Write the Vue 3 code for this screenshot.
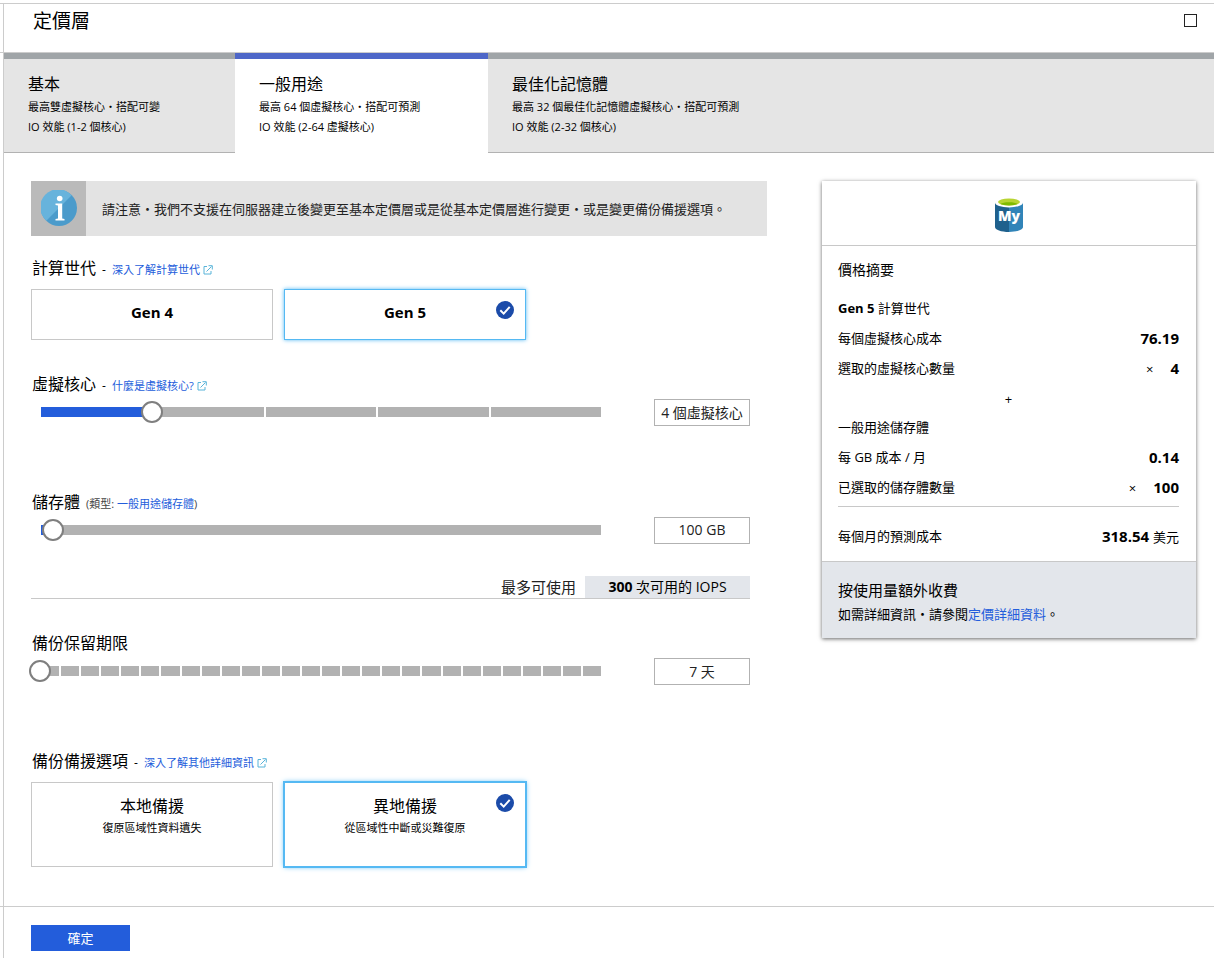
<script setup>
import { computed, ref } from 'vue'

const tabs = [
  { id: 'basic', title: '基本', lines: ['最高雙虛擬核心‧搭配可變', 'IO 效能 (1-2 個核心)'] },
  { id: 'general', title: '一般用途', lines: ['最高 64 個虛擬核心‧搭配可預測', 'IO 效能 (2-64 虛擬核心)'] },
  { id: 'memory', title: '最佳化記憶體', lines: ['最高 32 個最佳化記憶體虛擬核心‧搭配可預測', 'IO 效能 (2-32 個核心)'] },
]
const activeTab = ref('general')

const generations = ['Gen 4', 'Gen 5']
const generation = ref('Gen 5')

const coreSteps = [2, 4, 8, 16, 32, 64]
const coreIndex = ref(1)
const storage = ref(100)
const retention = ref(7)

const cores = computed(() => coreSteps[coreIndex.value])
const coreFill = computed(() => `${(coreIndex.value / 5) * 100}%`)
const storageFill = computed(() => `${((storage.value - 5) / 4091) * 100}%`)

const redundancies = [
  { id: 'local', title: '本地備援', note: '復原區域性資料遺失' },
  { id: 'geo', title: '異地備援', note: '從區域性中斷或災難復原' },
]
const redundancy = ref('geo')
</script>

<template>
  <div class="page">
    <header class="band head">
      <div class="inner head-inner">
        <h1>定價層</h1>
        <button type="button" class="maximize" aria-label="最大化"></button>
      </div>
    </header>

    <div class="band body">
      <div class="inner">
        <div class="tabs" role="tablist">
          <button
            v-for="tab in tabs"
            :key="tab.id"
            type="button"
            role="tab"
            class="tab"
            :class="[tab.id, { active: activeTab === tab.id }]"
            :aria-selected="activeTab === tab.id"
            @click="activeTab = tab.id"
          >
            <span class="tab-title">{{ tab.title }}</span>
            <span v-for="line in tab.lines" :key="line" class="tab-line">{{ line }}</span>
          </button>
        </div>

        <main class="content">
          <form class="settings" @submit.prevent>
            <div class="notice">
              <div class="notice-icon">
                <svg width="36" height="36" viewBox="0 0 36 36" aria-hidden="true">
                  <circle cx="18" cy="18" r="18" fill="#4b9bcb" />
                  <path d="M5.3 30.7A18 18 0 1 1 30.7 5.3Z" fill="#67b3dc" />
                  <circle cx="18.700" cy="8.500" r="2.800" fill="#fff" />
                  <path d="M14.500 13.500H21.200V28.500L23.500 29V30.400H14.500V29L17 28.500V15.500L14.500 15Z" fill="#fff" />
                </svg>
              </div>
              <p>請注意‧我們不支援在伺服器建立後變更至基本定價層或是從基本定價層進行變更‧或是變更備份備援選項。</p>
            </div>

            <section class="group first">
              <div class="heading">
                <h2>計算世代</h2>
                <span class="dash">-</span>
                <a href="#generation">深入了解計算世代<svg class="external" width="10" height="10" viewBox="0 0 10 10" aria-hidden="true"><path d="M4 1.500H1V9H8V6M3.500 6.500L8.500 1.500M5.500 .7H9.300V4.500" /></svg></a>
              </div>
              <div class="options">
                <label v-for="item in generations" :key="item" class="option" :class="{ chosen: generation === item }">
                  <input v-model="generation" type="radio" name="generation" :value="item" />
                  <strong>{{ item }}</strong>
                  <svg v-if="generation === item" class="check" width="18" height="18" viewBox="0 0 18 18" aria-hidden="true"><circle cx="9" cy="9" r="9" /><path d="M4.300 9.200L7.700 12.600L13.700 5.800" /></svg>
                </label>
              </div>
            </section>

            <section class="group near">
              <div class="heading">
                <h2 id="cores-label">虛擬核心</h2>
                <span class="dash">-</span>
                <a href="#vcore">什麼是虛擬核心?<svg class="external" width="10" height="10" viewBox="0 0 10 10" aria-hidden="true"><path d="M4 1.500H1V9H8V6M3.500 6.500L8.500 1.500M5.500 .7H9.300V4.500" /></svg></a>
              </div>
              <div class="slider-row">
                <div class="slider">
                  <div class="track">
                    <span v-for="n in 5" :key="n" class="segment"></span>
                    <span class="fill" :style="{ width: coreFill }"></span>
                  </div>
                  <input v-model.number="coreIndex" type="range" min="0" max="5" step="1" aria-labelledby="cores-label" />
                </div>
                <input class="value" type="text" readonly :value="`${cores} 個虛擬核心`" aria-labelledby="cores-label" />
              </div>
            </section>

            <section class="group far">
              <div class="heading">
                <h2 id="storage-label">儲存體</h2>
                <span class="type">(類型: <a href="#storage">一般用途儲存體</a>)</span>
              </div>
              <div class="slider-row">
                <div class="slider">
                  <div class="track">
                    <span class="segment"></span>
                    <span class="fill" :style="{ width: storageFill }"></span>
                  </div>
                  <input v-model.number="storage" type="range" min="5" max="4096" step="1" aria-labelledby="storage-label" />
                </div>
                <input class="value" type="text" readonly :value="`${storage} GB`" aria-labelledby="storage-label" />
              </div>
              <div class="iops">
                <span>最多可使用</span>
                <span class="iops-value"><b>300</b> 次可用的 IOPS</span>
              </div>
            </section>

            <section class="group near">
              <div class="heading">
                <h2 id="retention-label">備份保留期限</h2>
              </div>
              <div class="slider-row">
                <div class="slider">
                  <div class="track">
                    <span v-for="n in 28" :key="n" class="segment"></span>
                  </div>
                  <input v-model.number="retention" type="range" min="7" max="35" step="1" aria-labelledby="retention-label" />
                </div>
                <input class="value" type="text" readonly :value="`${retention} 天`" aria-labelledby="retention-label" />
              </div>
            </section>

            <section class="group far">
              <div class="heading">
                <h2>備份備援選項</h2>
                <span class="dash">-</span>
                <a href="#redundancy">深入了解其他詳細資訊<svg class="external" width="10" height="10" viewBox="0 0 10 10" aria-hidden="true"><path d="M4 1.500H1V9H8V6M3.500 6.500L8.500 1.500M5.500 .7H9.300V4.500" /></svg></a>
              </div>
              <div class="options">
                <label v-for="item in redundancies" :key="item.id" class="option tall" :class="{ chosen: redundancy === item.id }">
                  <input v-model="redundancy" type="radio" name="redundancy" :value="item.id" />
                  <span class="option-title">{{ item.title }}</span>
                  <span class="option-note">{{ item.note }}</span>
                  <svg v-if="redundancy === item.id" class="check" width="18" height="18" viewBox="0 0 18 18" aria-hidden="true"><circle cx="9" cy="9" r="9" /><path d="M4.300 9.200L7.700 12.600L13.700 5.800" /></svg>
                </label>
              </div>
            </section>
          </form>

          <aside class="summary">
            <div class="logo">
              <svg width="28" height="36" viewBox="0 0 28 36" role="img" aria-label="MySQL">
                <path d="M0 5.500V30C0 32.700 6 35 14 35V5.500Z" fill="#1f618d" />
                <path d="M14 5.500V35C22 35 28 32.700 28 30V5.500Z" fill="#3184b8" />
                <ellipse cx="14" cy="5.500" rx="14" ry="4.900" fill="#fff" />
                <ellipse cx="14" cy="5" rx="11" ry="3.500" fill="#b8d432" />
                <path d="M5.300 7.100C7 5.800 10 5.200 14 5.200S21 5.800 22.700 7.100C20.700 8 17.600 8.500 14 8.500S7.300 8 5.300 7.100Z" fill="#7fba00" />
                <text x="14" y="24" text-anchor="middle" font-size="14" font-weight="800" fill="#fff">My</text>
              </svg>
            </div>
            <div class="prices">
              <h2>價格摘要</h2>
              <h3><b>Gen 5</b> 計算世代</h3>
              <dl>
                <div><dt>每個虛擬核心成本</dt><dd>76.19</dd></div>
                <div><dt>選取的虛擬核心數量</dt><dd><span class="times">×</span>4</dd></div>
              </dl>
              <p class="plus">+</p>
              <h3>一般用途儲存體</h3>
              <dl>
                <div><dt>每 GB 成本 / 月</dt><dd>0.14</dd></div>
                <div><dt>已選取的儲存體數量</dt><dd><span class="times">×</span>100</dd></div>
              </dl>
              <dl class="total">
                <div><dt>每個月的預測成本</dt><dd>318.54 <span class="currency">美元</span></dd></div>
              </dl>
            </div>
            <div class="extra">
              <h2>按使用量額外收費</h2>
              <p>如需詳細資訊‧請參閱<a href="#pricing">定價詳細資料</a>。</p>
            </div>
          </aside>
        </main>
      </div>
    </div>

    <footer class="band foot">
      <div class="inner foot-inner">
        <button type="button" class="ok">確定</button>
      </div>
    </footer>
  </div>
</template>

<style>
body {
  margin: 0;
  background: #fff;
}
</style>

<style scoped>
.page {
  display: flex;
  flex-direction: column;
  min-height: 100vh;
  box-sizing: border-box;
  padding-top: 3px;
  color: #000;
  font-family: "Open Sans", "Noto Sans CJK TC", sans-serif;
  font-size: 13px;
}
.page *,
.page *::before {
  box-sizing: border-box;
}
h1,
h2,
h3,
p,
dl,
dd {
  margin: 0;
  font-weight: 400;
}
button,
input {
  font-family: inherit;
  color: inherit;
}
a {
  color: #235ddb;
  text-decoration: none;
}
.band {
  display: flex;
  padding-left: 3px;
}
.inner {
  flex: 1;
  min-width: 0;
  border-left: 1px solid #ccc;
}
.head {
  border-top: 1px solid #ccc;
  border-bottom: 1px solid #ccc;
}
.head-inner {
  display: flex;
  align-items: flex-start;
  justify-content: space-between;
  height: 48px;
  padding: 3px 17px 0 29px;
}
h1 {
  font-size: 19px;
  line-height: 28px;
}
.maximize {
  width: 13px;
  height: 13px;
  margin-top: 7px;
  padding: 0;
  border: 1px solid #222;
  background: #fff;
}
.body {
  flex: 1;
}
.tabs {
  display: flex;
}
.tab {
  display: flex;
  flex-direction: column;
  align-items: flex-start;
  height: 100px;
  padding: 13px 24px 0;
  border: 0;
  border-top: 6px solid #a0a5a8;
  border-bottom: 1px solid #b2b2b2;
  background: #e5e5e5;
  text-align: left;
}
.tab.basic {
  flex: 0 0 231px;
}
.tab.general {
  flex: 0 0 253px;
}
.tab.memory {
  flex: 1;
}
.tab.active {
  border-top-color: #4e67c8;
  border-bottom-color: #fff;
  background: #fff;
}
.tab-title {
  margin-bottom: 1px;
  font-size: 16px;
  line-height: 24px;
}
.tab-line {
  font-size: 11px;
  line-height: 20px;
  white-space: nowrap;
}
.content {
  display: grid;
  grid-template-columns: minmax(0, 1fr) 374px;
  align-items: start;
  gap: 55px;
  padding: 28px 18px 28px 27px;
}
.notice {
  display: flex;
  align-items: center;
  min-height: 55px;
  background: #e3e3e3;
  color: #222;
}
.notice-icon {
  display: flex;
  flex: 0 0 55px;
  align-items: center;
  justify-content: center;
  align-self: stretch;
  padding-bottom: 1px;
  background: #bababa;
}
.notice p {
  padding: 0 16px;
  line-height: 20px;
}
.group {
  margin-right: 17px;
}
.group.first {
  margin-top: 20px;
}
.group.near {
  margin-top: 32px;
}
.group.far {
  margin-top: 64px;
}
.heading {
  display: flex;
  align-items: baseline;
  height: 24px;
  padding-left: 1px;
  font-size: 11px;
  line-height: 24px;
}
.heading h2 {
  font-size: 16px;
}
.dash {
  margin: 0 6px;
  font-size: 12px;
}
.type {
  margin-left: 6px;
  color: #444;
}
.external {
  margin-left: 3px;
  vertical-align: -1px;
  fill: none;
  stroke: #59b4d9;
}
.options {
  display: grid;
  grid-template-columns: 242px 242px;
  gap: 11px;
  margin-top: 9px;
}
.option {
  position: relative;
  display: flex;
  flex-direction: column;
  align-items: center;
  min-height: 51px;
  padding-top: 11px;
  border: 1px solid #c8c8c8;
}
.option.tall {
  min-height: 85px;
}
.option.chosen {
  border-color: #55b9f3;
  box-shadow: 0 0 4px #55b9f3;
}
.option.tall.chosen {
  box-shadow: 0 0 0 1px #55b9f3, 0 0 5px #55b9f3;
}
.option input {
  position: absolute;
  opacity: 0;
}
.option strong {
  font-size: 15px;
  line-height: 22px;
}
.option-title {
  font-size: 16px;
  line-height: 24px;
}
.option-note {
  font-size: 11px;
  line-height: 20px;
}
.check {
  position: absolute;
  top: 11px;
  right: 11px;
  fill: #1b4ba9;
}
.check path {
  fill: none;
  stroke: #fff;
  stroke-width: 2;
}
.slider-row {
  display: flex;
  align-items: center;
  gap: 53px;
  margin-top: 3px;
  padding-left: 10px;
}
.slider {
  position: relative;
  flex: 1;
  margin-bottom: 2px;
}
.track {
  position: relative;
  display: flex;
  height: 10px;
}
.segment {
  flex: 1;
  border: solid #fff;
  border-width: 0 1px;
  background: #b2b2b2;
}
.segment:first-child {
  border-left: 0;
}
.segment:nth-last-child(1),
.segment:nth-last-child(2):has(+ .fill) {
  border-right: 0;
}
.fill {
  position: absolute;
  top: 0;
  bottom: 0;
  left: 0;
  background: #235ddb;
}
.slider input {
  position: absolute;
  top: -6px;
  left: -12px;
  width: calc(100% + 24px);
  height: 22px;
  margin: 0;
  background: transparent;
  appearance: none;
}
.slider input::-webkit-slider-thumb {
  width: 22px;
  height: 22px;
  border: 2px solid #7f7f7f;
  border-radius: 50%;
  background: #fff;
  appearance: none;
}
.value {
  width: 96px;
  height: 27px;
  padding: 0 0 2px;
  border: 1px solid #b2b2b2;
  background: #fff;
  color: #222;
  font-size: 14px;
  text-align: center;
}
.iops {
  display: flex;
  justify-content: flex-end;
  gap: 9px;
  margin-top: 32px;
  border-bottom: 1px solid #c8c8c8;
  color: #222;
  font-size: 15px;
  line-height: 22px;
}
.iops-value {
  width: 165px;
  background: #e3e6eb;
  color: #000;
  font-size: 14px;
  text-align: center;
}
.summary {
  box-shadow: 0 1px 4px rgba(0, 0, 0, 0.6);
}
.logo {
  display: flex;
  justify-content: center;
  height: 65px;
  padding-top: 16px;
  border-bottom: 1px solid #c8c8c8;
}
.prices {
  padding: 9px 17px 10px 16px;
  line-height: 30px;
}
.prices h2 {
  margin-bottom: 8px;
  font-size: 14px;
}
.prices h3 {
  font-size: 13px;
}
.prices dl div {
  display: flex;
  justify-content: space-between;
  height: 30px;
}
.prices dd {
  font-size: 15px;
  font-weight: 700;
}
.times {
  margin-right: 17px;
  font-size: 13px;
  font-weight: 400;
}
.plus {
  margin-top: 3px;
  font-size: 13px;
  line-height: 26px;
  text-align: center;
}
.prices .total {
  margin-top: 4px;
  padding-top: 14px;
  border-top: 1px solid #c8c8c8;
}
.currency {
  font-size: 13px;
  font-weight: 400;
}
.extra {
  padding: 16px 16px 12px;
  border-top: 1px solid #c8c8c8;
  background: #e3e6eb;
  line-height: 24px;
}
.extra h2 {
  font-size: 15px;
}
.foot {
  border-top: 1px solid #ccc;
}
.foot-inner {
  padding: 18px 27px 7px;
}
.ok {
  display: block;
  width: 99px;
  height: 26px;
  padding: 0 0 1px;
  border: 0;
  background: #235ddb;
  color: #fff;
  font-size: 13px;
}
</style>
